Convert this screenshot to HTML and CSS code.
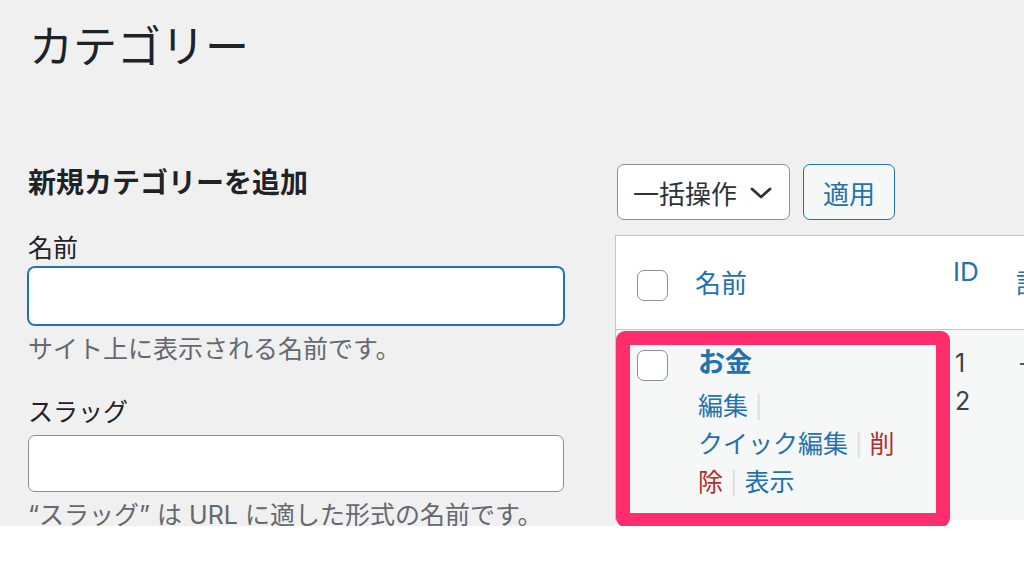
FILE: index.html
```html
<!DOCTYPE html>
<html lang="ja">
<head>
<meta charset="UTF-8">
<meta name="viewport" content="width=device-width, initial-scale=1.0">
<title>カテゴリー</title>
<link rel="stylesheet" href="styles.css">
</head>
<body>

<div class="screen">
    <h1 class="page-title">カテゴリー</h1>

    <div class="columns">
        <div class="col-left">
            <h2 class="form-title">新規カテゴリーを追加</h2>

            <div class="form-field">
                <label class="field-label" for="tag-name">名前</label>
                <input type="text" id="tag-name" class="field-input is-focused">
                <p class="field-help">サイト上に表示される名前です。</p>
            </div>

            <div class="form-field slug-field">
                <label class="field-label" for="tag-slug">スラッグ</label>
                <input type="text" id="tag-slug" class="field-input">
                <p class="field-help">“スラッグ” は URL に適した形式の名前です。</p>
            </div>
        </div>

        <div class="col-right">
            <div class="tablenav">
                <div class="bulk-select">
                    <span>一括操作</span>
                    <svg class="chevron" width="22" height="12" viewBox="0 0 22 12">
                        <path d="M2 2 L11 10 L20 2" fill="none" stroke="#2c3338" stroke-width="2.8" stroke-linecap="round" stroke-linejoin="round"/>
                    </svg>
                </div>
                <button type="button" class="button">適用</button>
            </div>

            <table class="list-table">
                <colgroup>
                    <col class="col-check">
                    <col class="col-name">
                    <col class="col-id">
                    <col>
                </colgroup>
                <thead>
                    <tr>
                        <th class="check-column"><input type="checkbox" class="cb"></th>
                        <th class="name-head"><a href="#">名前</a></th>
                        <th class="id-head"><a href="#">ID</a></th>
                        <th class="desc-head"><a href="#">説明</a></th>
                    </tr>
                </thead>
                <tbody>
                    <tr>
                        <td class="check-column"><input type="checkbox" class="cb"></td>
                        <td class="name-cell">
                            <a href="#" class="row-title">お金</a>
                            <div class="row-actions">
                                <span><a href="#">編集</a> <i class="sep">|</i> </span>
                                <span><button type="button" class="button-link">クイック編集</button> <i class="sep">|</i> </span>
                                <span><a href="#" class="delete">削除</a> <i class="sep">|</i> </span>
                                <span><a href="#">表示</a></span>
                            </div>
                        </td>
                        <td class="id-cell">12</td>
                        <td class="desc-cell">—</td>
                    </tr>
                </tbody>
            </table>
            <div class="list-end"></div>
        </div>
    </div>

    <div class="highlight"></div>
</div>

</body>
</html>
```

FILE: styles.css
```css
* {
    margin: 0;
    padding: 0;
    box-sizing: border-box;
}

html, body {
    background: #fff;
    overflow: hidden;
}

body {
    font-family: Inter, "Noto Sans CJK JP", sans-serif;
    color: #1d2327;
}

a {
    color: #2271b1;
    text-decoration: none;
}

.screen {
    position: relative;
    width: 1024px;
    height: 526px;
    overflow: hidden;
    background: #f0f0f1;
    padding: 19px 0 0 28px;
}

.page-title {
    font-size: 44px;
    font-weight: 400;
    line-height: 56px;
    padding-left: 1px;
}

.columns {
    display: flex;
    margin-top: 89px;
}

/* left: add form */

.col-left {
    flex: none;
    width: 536px;
}

.form-title {
    font-size: 28px;
    font-weight: 700;
    line-height: 36px;
    margin: 1px 0 30px;
}

.field-label {
    display: block;
    font-size: 25px;
    line-height: 34px;
}

.field-input {
    display: block;
    width: 100%;
    height: 58px;
    margin-top: 2px;
    background: #fff;
    border: 1px solid #8c8f94;
    border-radius: 7px;
    outline: none;
    font: inherit;
}

.field-input.is-focused {
    border-color: #2271b1;
    box-shadow: 0 0 0 1px #2271b1;
}

.field-help {
    font-size: 25px;
    line-height: 30px;
    color: #646970;
    margin-top: 9px;
}

.slug-field {
    margin-top: 31px;
}

.slug-field .field-input {
    margin-top: 6px;
    height: 57px;
}

.slug-field .field-help {
    margin-top: 8px;
}

/* right: list */

.col-right {
    flex: none;
    width: 700px;
    margin-left: 51px;
}

.tablenav {
    display: flex;
    gap: 13px;
    height: 56px;
    padding-left: 2px;
}

.bulk-select {
    display: flex;
    align-items: center;
    justify-content: space-between;
    width: 173px;
    padding: 0 17px 0 15px;
    background: #fff;
    border: 1px solid #8c8f94;
    border-radius: 7px;
    font-size: 26px;
    color: #2c3338;
}

.chevron {
    margin-top: 2px;
}

.button {
    width: 92px;
    background: #f6f7f7;
    border: 1px solid #2271b1;
    border-radius: 7px;
    color: #2271b1;
    font-family: inherit;
    font-size: 26px;
}

.list-table {
    width: 700px;
    margin-top: 15px;
    table-layout: fixed;
    border-collapse: separate;
    border-spacing: 0;
    border: 1px solid #c3c4c7;
    border-bottom: 0;
    background: #fff;
}

.col-check { width: 64px; }
.col-name { width: 256px; }
.col-id { width: 65px; }

th, td {
    text-align: left;
    vertical-align: top;
    font-weight: 400;
}

th {
    font-size: 26px;
    line-height: 34px;
    border-bottom: 1px solid #c3c4c7;
}

.cb {
    appearance: none;
    display: block;
    width: 31px;
    height: 31px;
    background: #fff;
    border: 1px solid #8c8f94;
    border-radius: 7px;
}

th.check-column {
    padding: 34px 0 28px 21px;
}

.name-head {
    padding: 31px 0 0 15px;
}

.id-head {
    padding: 19px 0 0 17px;
}

.desc-head {
    padding: 31px 0 0 15px;
}

tbody tr {
    background: #f6f7f7;
}

td.check-column {
    padding: 20px 0 0 21px;
}

.name-cell {
    padding: 15px 28px 18px 18px;
}

.row-title {
    font-size: 27px;
    font-weight: 700;
    line-height: 36px;
}

.row-actions {
    margin-top: 7px;
    font-size: 25px;
    line-height: 37px;
}

.sep {
    font-style: normal;
    font-size: 22px;
    color: #dcdcde;
}

.button-link {
    display: inline-block;
    background: none;
    border: 0;
    font: inherit;
    line-height: inherit;
    color: #2271b1;
}

.delete {
    color: #b32d2e;
}

.id-cell {
    padding: 14px 26px 0 19px;
    font-size: 25px;
    line-height: 38px;
    color: #3c434a;
    word-break: break-all;
}

.desc-cell {
    padding: 15px 0 0 19px;
    font-size: 25px;
    line-height: 36px;
    color: #50575e;
}

.list-end {
    height: 20px;
    background: #fff;
}

/* pink annotation drawn over the row */
.highlight {
    position: absolute;
    left: 616px;
    top: 331px;
    width: 334px;
    height: 196px;
    border: 14.5px solid #ff2d6b;
    border-radius: 9px;
}
```
